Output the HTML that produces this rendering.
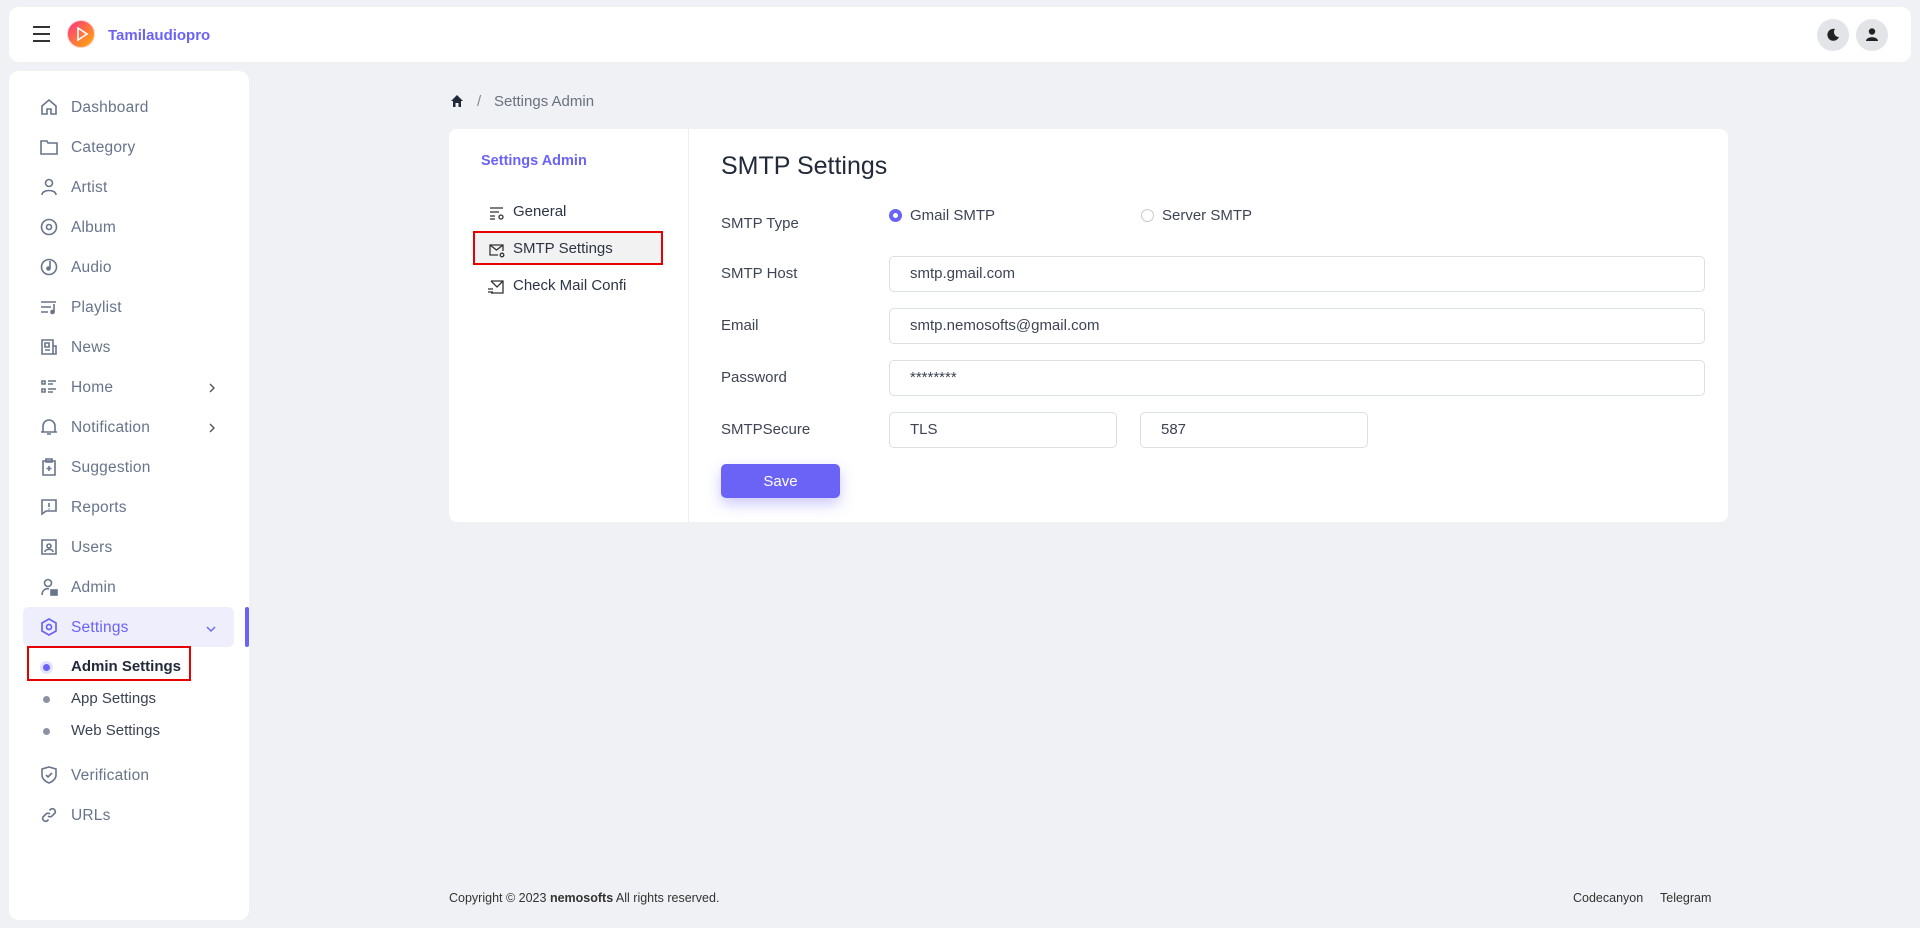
<!DOCTYPE html>
<html><head><meta charset="utf-8"><style>
*{box-sizing:border-box;margin:0;padding:0}
body{width:1920px;height:928px;background:#f0f1f4;font-family:"Liberation Sans",sans-serif;position:relative;overflow:hidden;color:#2c3444}
.abs{position:absolute}
.hdr{left:9px;top:7px;width:1902px;height:55px;background:#fff;border-radius:10px}
.side{left:9px;top:71px;width:240px;height:849px;background:#fff;border-radius:10px}
.mi{position:absolute;left:40px;height:24px;display:flex;align-items:center;font-size:15.5px;color:#67748a}
.mi svg{position:absolute;left:0;top:2px}
.mi span{position:absolute;left:31px;white-space:nowrap;letter-spacing:.2px}
.chev{position:absolute;left:170px;top:5px}
.sub{position:absolute;left:71px;font-size:15px;color:#3a4252}
.dot{position:absolute;left:43px;width:7px;height:7px;border-radius:50%;background:#8b93a3}
.card{left:449px;top:129px;width:1279px;height:393px;background:#fff;border-radius:8px}
.lbl{position:absolute;left:721px;font-size:15px;color:#3d4454}
.inp{position:absolute;left:889px;height:36px;border:1px solid #dcdfe4;border-radius:5px;font-size:15px;color:#3d4454;padding-left:20px;line-height:34px;background:#fff}
</style></head><body>
<div class="abs hdr"></div>
<div class="abs" style="left:33px;top:26px;width:17px;height:2px;background:#333;box-shadow:0 7px 0 #333,0 14px 0 #333"></div>
<div class="abs" style="left:67px;top:20px;width:28px;height:28px;border-radius:50%;background:linear-gradient(135deg,#ff2f86,#ffb300);border:1.5px solid #ffd0d0"></div>
<svg class="abs" style="left:75px;top:27px" width="14" height="14"><path d="M3 1L12 7L3 13Z" fill="none" stroke="#fff" stroke-width="1.6"/></svg>
<div class="abs" style="left:108px;top:27px;font-size:15px;font-weight:bold;color:#6b63f6">Tamilaudiopro</div>
<div class="abs" style="left:1817px;top:19px;width:32px;height:32px;border-radius:50%;background:#e3e4e8"></div>
<svg class="abs" style="left:1826px;top:28px" width="14" height="14"><path d="M9 1A6 6 0 1 0 13 9A5 5 0 0 1 9 1Z" fill="#222"/></svg>
<div class="abs" style="left:1856px;top:19px;width:32px;height:32px;border-radius:50%;background:#e3e4e8"></div>
<svg class="abs" style="left:1865px;top:27px" width="14" height="15"><circle cx="7" cy="4.5" r="3.2" fill="#222"/><path d="M1 14C1 9 13 9 13 14Z" fill="#222"/></svg>

<div class="abs side"></div>
<div class="abs" style="left:23px;top:607px;width:211px;height:40px;background:#eeeefc;border-radius:6px"></div>
<div class="abs" style="left:245px;top:607px;width:4px;height:40px;background:#6b63f6;border-radius:3px"></div>
<div class="mi" style="top:96px"><svg width="18" height="18" fill="none" stroke="#67748a" stroke-width="1.6"><path d="M2 8L9 2L16 8V16H11V11H7V16H2Z"/></svg><span>Dashboard</span></div>
<div class="mi" style="top:136px"><svg width="18" height="18" fill="none" stroke="#67748a" stroke-width="1.6"><path d="M1 3H7L8 5H17V16H1Z"/></svg><span>Category</span></div>
<div class="mi" style="top:176px"><svg width="18" height="18" fill="none" stroke="#67748a" stroke-width="1.6"><circle cx="9" cy="5" r="3.5"/><path d="M2 17C2 11 16 11 16 17"/></svg><span>Artist</span></div>
<div class="mi" style="top:216px"><svg width="18" height="18" fill="none" stroke="#67748a" stroke-width="1.6"><circle cx="9" cy="9" r="7.5"/><circle cx="9" cy="9" r="2.5"/></svg><span>Album</span></div>
<div class="mi" style="top:256px"><svg width="18" height="18" fill="none" stroke="#67748a" stroke-width="1.6"><circle cx="9" cy="9" r="7.5"/><path d="M10 3V10"/><circle cx="8.5" cy="10.5" r="1.5" fill="#67748a"/></svg><span>Audio</span></div>
<div class="mi" style="top:296px"><svg width="18" height="18" fill="none" stroke="#67748a" stroke-width="1.6"><path d="M1 4H16M1 9H11M1 14H8M14 6V14"/><circle cx="12.5" cy="14" r="1.5" fill="#67748a"/></svg><span>Playlist</span></div>
<div class="mi" style="top:336px"><svg width="18" height="18" fill="none" stroke="#67748a" stroke-width="1.6"><path d="M2 2H13V16H2ZM13 8H16V16H13M5 5H9V9H5ZM5 12H10"/></svg><span>News</span></div>
<div class="mi" style="top:376px"><svg width="18" height="18" fill="none" stroke="#67748a" stroke-width="1.6"><path d="M2 3H5V6H2ZM2 11H5V14H2ZM8 3H16M8 6H13M8 11H16M8 14H13"/></svg><span>Home</span><svg class="chev" style="left:168px;top:7px" width="8" height="10" fill="none" stroke="#555" stroke-width="1.4"><path d="M2 1L6 5L2 9"/></svg></div>
<div class="mi" style="top:416px"><svg width="18" height="18" fill="none" stroke="#67748a" stroke-width="1.6"><path d="M3 14V8A6 6 0 0 1 15 8V14H3ZM1 14H17M7 16H11"/></svg><span>Notification</span><svg class="chev" style="left:168px;top:7px" width="8" height="10" fill="none" stroke="#555" stroke-width="1.4"><path d="M2 1L6 5L2 9"/></svg></div>
<div class="mi" style="top:456px"><svg width="18" height="18" fill="none" stroke="#67748a" stroke-width="1.6"><path d="M3 3H15V17H3ZM6 1H12V4H6ZM9 8V13M6.5 10.5H11.5"/></svg><span>Suggestion</span></div>
<div class="mi" style="top:496px"><svg width="18" height="18" fill="none" stroke="#67748a" stroke-width="1.6"><path d="M2 2H16V13H6L2 16ZM9 5V9M9 10.5V11.5"/></svg><span>Reports</span></div>
<div class="mi" style="top:536px"><svg width="18" height="18" fill="none" stroke="#67748a" stroke-width="1.6"><path d="M2 2H16V16H2Z"/><circle cx="9" cy="8" r="2"/><path d="M5 14C5 10.5 13 10.5 13 14"/></svg><span>Users</span></div>
<div class="mi" style="top:576px"><svg width="18" height="18" fill="none" stroke="#67748a" stroke-width="1.6"><circle cx="8" cy="5" r="3.5"/><path d="M2 17C2 12 6 10 9 11"/><rect x="11" y="12" width="6" height="5" fill="#67748a"/></svg><span>Admin</span></div>
<div class="mi" style="top:616px;color:#6b63f6"><svg width="18" height="18" fill="none" stroke="#6b63f6" stroke-width="1.7"><path d="M9 1L16 5V13L9 17L2 13V5Z"/><circle cx="9" cy="9" r="2.5"/></svg><span>Settings</span><svg class="chev" style="left:166px;top:9px" width="10" height="8" fill="none" stroke="#6b63f6" stroke-width="1.4"><path d="M1 2L5 6L9 2"/></svg></div>
<div class="dot" style="top:664px;background:#6b63f6;box-shadow:0 0 0 3px #e4e3fd"></div>
<div class="sub" style="top:658px;font-weight:bold;color:#222a3a">Admin Settings</div>
<div class="dot" style="top:696px"></div><div class="sub" style="top:690px">App Settings</div>
<div class="dot" style="top:728px"></div><div class="sub" style="top:722px">Web Settings</div>
<div class="mi" style="top:764px"><svg width="18" height="18" fill="none" stroke="#67748a" stroke-width="1.6"><path d="M9 1L16 3V9C16 13 12 16 9 17C6 16 2 13 2 9V3Z"/><path d="M6 9L8 11L12 7"/></svg><span>Verification</span></div>
<div class="mi" style="top:804px"><svg width="18" height="18" fill="none" stroke="#67748a" stroke-width="1.6"><path d="M8 10A3 3 0 0 0 12 10L15 7A3 3 0 0 0 11 3L9.5 4.5M10 8A3 3 0 0 0 6 8L3 11A3 3 0 0 0 7 15L8.5 13.5"/></svg><span>URLs</span></div>
<div class="abs" style="left:27px;top:646px;width:164px;height:35px;border:2.5px solid #e60000"></div>

<svg class="abs" style="left:450px;top:94px" width="14" height="14"><path d="M7 1L13 7H11V13H8.5V9H5.5V13H3V7H1Z" fill="#222a3a"/></svg>
<div class="abs" style="left:477px;top:93px;font-size:15px;color:#888">/</div>
<div class="abs" style="left:494px;top:93px;font-size:15px;color:#6a7080">Settings Admin</div>

<div class="abs card"></div>
<div class="abs" style="left:688px;top:129px;width:1px;height:393px;background:#eceef1"></div>
<div class="abs" style="left:481px;top:153px;font-size:14.5px;font-weight:bold;color:#6b63f6">Settings Admin</div>
<div class="abs" style="left:473px;top:231px;width:190px;height:34px;background:#f2f2f2"></div>
<svg class="abs" style="left:489px;top:206px" width="16" height="14" fill="none" stroke="#333" stroke-width="1.3"><path d="M1 2H14M1 6H10M1 10H6M1 13H6"/><circle cx="12" cy="11" r="2"/></svg>
<div class="abs" style="left:513px;top:203px;font-size:15px;color:#2c3444">General</div>
<svg class="abs" style="left:489px;top:243px" width="16" height="15" fill="none" stroke="#333" stroke-width="1.3"><path d="M9 12H1V2H14V8M1 2L7.5 7L14 2"/><circle cx="13" cy="12" r="1.8"/></svg>
<div class="abs" style="left:513px;top:240px;font-size:15px;color:#2c3444">SMTP Settings</div>
<svg class="abs" style="left:488px;top:280px" width="16" height="14" fill="none" stroke="#333" stroke-width="1.3"><path d="M3 1H15V13H3M3 1L9 7L15 1M0 9H5M0 12H5"/></svg>
<div class="abs" style="left:513px;top:277px;font-size:15px;color:#2c3444">Check Mail Confi</div>
<div class="abs" style="left:473px;top:231px;width:190px;height:34px;border:2.5px solid #e60000"></div>

<div class="abs" style="left:721px;top:152px;font-size:25px;color:#222a3a">SMTP Settings</div>
<div class="lbl" style="top:215px">SMTP Type</div>
<div class="lbl" style="top:265px">SMTP Host</div>
<div class="lbl" style="top:317px">Email</div>
<div class="lbl" style="top:369px">Password</div>
<div class="lbl" style="top:421px">SMTPSecure</div>
<div class="abs" style="left:889px;top:209px;width:13px;height:13px;border-radius:50%;border:4px solid #6b63f6"></div>
<div class="abs" style="left:910px;top:207px;font-size:15px;color:#3d4454">Gmail SMTP</div>
<div class="abs" style="left:1141px;top:209px;width:13px;height:13px;border-radius:50%;border:1px solid #c7cad0"></div>
<div class="abs" style="left:1162px;top:207px;font-size:15px;color:#3d4454">Server SMTP</div>
<div class="inp" style="top:256px;width:816px">smtp.gmail.com</div>
<div class="inp" style="top:308px;width:816px">smtp.nemosofts@gmail.com</div>
<div class="inp" style="top:360px;width:816px">********</div>
<div class="inp" style="top:412px;width:228px">TLS</div>
<div class="inp" style="top:412px;left:1140px;width:228px">587</div>
<div class="abs" style="left:721px;top:464px;width:119px;height:34px;background:#6b63f6;border-radius:5px;color:#fff;font-size:15px;text-align:center;line-height:36px;box-shadow:0 6px 14px rgba(107,99,246,.35)">Save</div>

<div class="abs" style="left:449px;top:891px;font-size:12.5px;color:#333">Copyright © 2023 <b>nemosofts</b> All rights reserved.</div>
<div class="abs" style="left:1573px;top:891px;font-size:12.5px;color:#333">Codecanyon</div>
<div class="abs" style="left:1660px;top:891px;font-size:12.5px;color:#333">Telegram</div>
</body></html>
